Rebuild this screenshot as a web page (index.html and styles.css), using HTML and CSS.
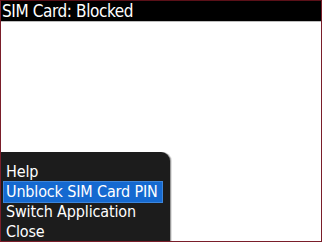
FILE: index.html
```html
<!DOCTYPE html>
<html>
<head>
<meta charset="utf-8">
<link rel="stylesheet" href="styles.css">
</head>
<body>
<div class="screen">
  <div class="titlebar">SIM Card: Blocked</div>
  <div class="content"></div>
  <div class="menu">
    <div class="item">Help</div>
    <div class="item selected">Unblock SIM Card PIN</div>
    <div class="item">Switch Application</div>
    <div class="item">Close</div>
  </div>
</div>
</body>
</html>
```
FILE: styles.css
```css
html, body {
  margin: 0;
  padding: 0;
  width: 322px;
  height: 242px;
  overflow: hidden;
  background: #fff;
}
.screen {
  box-sizing: border-box;
  width: 322px;
  height: 242px;
  border: 1px solid #7a1e2a;
  border-top-color: #5a1018;
  display: flex;
  flex-direction: column;
  position: relative;
  font-family: "DejaVu Sans Condensed", "DejaVu Sans", sans-serif;
  font-stretch: condensed;
  overflow: hidden;
}
.titlebar {
  background: #000;
  color: #fff;
  font-size: 17px;
  letter-spacing: -0.4px;
  line-height: 20px;
  height: 20px;
  padding-left: 1px;
  border-bottom: 1px solid #bdbdbd;
}
.content {
  flex: 1;
  background: #fff;
}
.menu {
  position: absolute;
  left: 0;
  bottom: 0;
  width: 169px;
  height: 89px;
  background: #1c1c1c;
  border-top-right-radius: 9px;
  box-shadow: 1px 0 0 #9a9a9a, 2px 0 0 #e0e0e0;
  padding: 10px 0 0 3px;
  box-sizing: border-box;
}
.item {
  color: #fff;
  font-size: 16px;
  letter-spacing: -0.15px;
  line-height: 20px;
  height: 20px;
  padding-left: 2px;
  width: 158px;
  box-sizing: border-box;
  white-space: nowrap;
}
.selected {
  background: #1569d0;
  outline: 1px solid #3d86dc;
}
```
